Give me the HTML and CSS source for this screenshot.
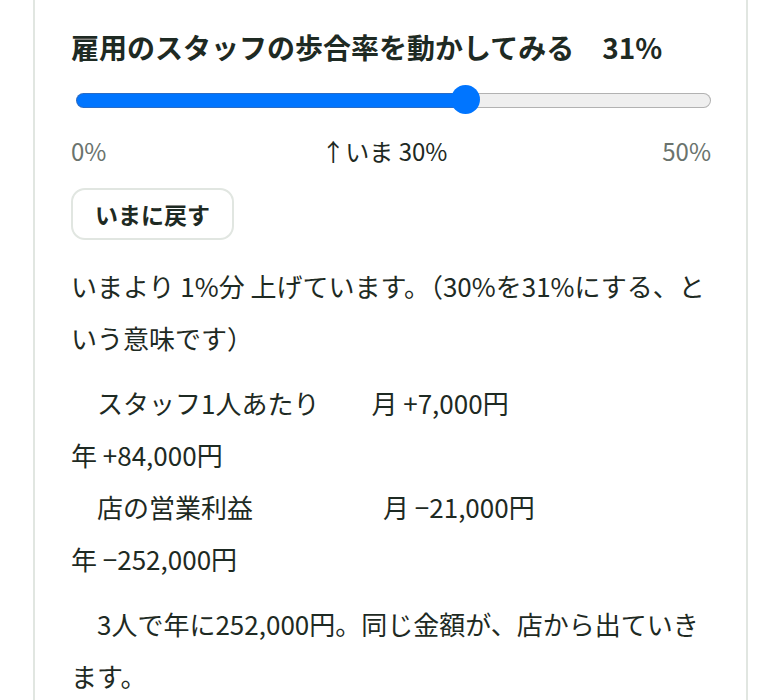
FILE: index.html
```html
<!DOCTYPE html>
<html lang="ja">
  <head>
    <meta charset="UTF-8" />
    <title>歩合率シミュレーター</title>
    <meta name="viewport" content="width=device-width, initial-scale=1.0" />
    <link rel="stylesheet" href="styles.css">
  </head>

  <body>
    <div class="page">
      <section class="sim-card">
        <h2 class="sim-title">雇用のスタッフの歩合率を動かしてみる　<span id="rate-value">31%</span></h2>

        <input
          id="rate-slider"
          class="rate-slider"
          type="range"
          min="0"
          max="50"
          step="1"
          value="31"
          style="--fill: 61.4%"
        />

        <div class="rate-scale">
          <span class="rate-edge">0%</span>
          <span class="rate-now">↑いま 30%</span>
          <span class="rate-edge">50%</span>
        </div>

        <button type="button" class="reset-btn">いまに戻す</button>

        <p class="sim-note">いまより 1%分 上げています。（30%を31%にする、という意味です）</p>

        <div class="impact">
          <p class="impact-row">スタッフ1人あたり　　<span>月 +7,000円</span><br />年 +84,000円</p>
          <p class="impact-row">店の営業利益　　　　　<span>月 −21,000円</span><br />年 −252,000円</p>
        </div>

        <p class="sim-summary">3人で年に252,000円。同じ金額が、店から出ていきます。</p>
      </section>
    </div>
  </body>
</html>
```

FILE: styles.css
```css
:root {
  --ink: #1e2a23;
  --muted: #6a736d;
  --line: #e1e6e1;
  --accent: #0075ff;
  --accent-edge: #2a6cc6;
}

html,
body {
  margin: 0;
  background: #fff;
  font-family: "Noto Sans CJK JP", "Noto Sans", sans-serif;
  color: var(--ink);
}

.page {
  padding: 0 32px 0 33px;
}

.sim-card {
  margin-top: -41px;
  border: 2px solid var(--line);
  border-radius: 16px;
  padding: 66px 35px 36px 36px;
  background: #fff;
}

.sim-title {
  margin: 0;
  font-size: 28px;
  font-weight: 700;
  line-height: 40px;
}

/* range input: blue fill up to the thumb, grey rail after it */
.rate-slider {
  -webkit-appearance: none;
  appearance: none;
  display: block;
  width: calc(100% - 5px);
  height: 30px;
  margin: 18px 0 0 5px;
  padding: 0;
  background: transparent;
}

.rate-slider::-webkit-slider-runnable-track {
  height: 15px;
  box-sizing: border-box;
  border: 1.5px solid transparent;
  border-radius: 8px;
  background: linear-gradient(to right, var(--accent) var(--fill), #efefef var(--fill)) padding-box,
    linear-gradient(to right, var(--accent-edge) var(--fill), #b2b2b2 var(--fill)) border-box;
}

.rate-slider::-webkit-slider-thumb {
  -webkit-appearance: none;
  width: 29px;
  height: 29px;
  margin-top: -8.5px;
  border: none;
  border-radius: 50%;
  background: var(--accent);
}

.rate-scale {
  display: flex;
  justify-content: space-between;
  margin-top: 18px;
  font-size: 24px;
  line-height: 36px;
}

.rate-edge {
  color: var(--muted);
}

.reset-btn {
  display: block;
  margin-top: 19px;
  padding: 8px 22px;
  border: 2px solid var(--line);
  border-radius: 14px;
  background: #fff;
  color: var(--ink);
  font-family: inherit;
  font-size: 23px;
  font-weight: 700;
  line-height: 32px;
}

.sim-note,
.impact-row,
.sim-summary {
  margin: 0;
  font-size: 26px;
  line-height: 52px;
}

.sim-note {
  margin-top: 20px;
}

.impact {
  margin-top: 13px;
}

.impact-row,
.sim-summary {
  text-indent: 1em;
}

.sim-summary {
  margin-top: 13px;
}
```
